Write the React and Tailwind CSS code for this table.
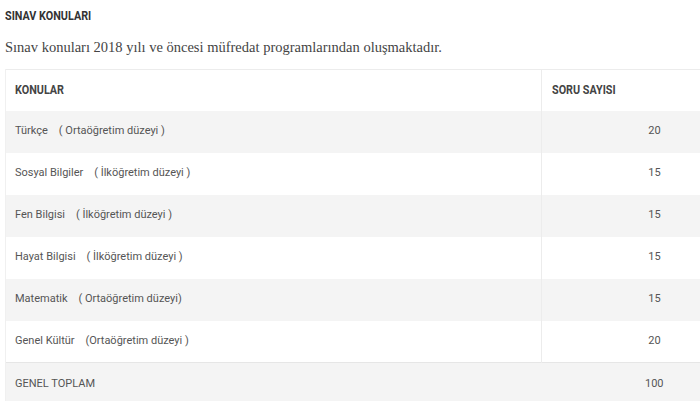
const rows = [
  { name: "Türkçe", level: "( Ortaöğretim düzeyi )", count: 20, gray: true },
  { name: "Sosyal Bilgiler", level: "( İlköğretim düzeyi )", count: 15 },
  { name: "Fen Bilgisi", level: "( İlköğretim düzeyi )", count: 15, gray: true },
  { name: "Hayat Bilgisi", level: "( İlköğretim düzeyi )", count: 15 },
  { name: "Matematik", level: "( Ortaöğretim düzeyi)", count: 15, gray: true },
  { name: "Genel Kültür", level: "(Ortaöğretim düzeyi )", count: 20 },
];

export default function App() {
  return (
    <div className="w-[700px] h-[401px] overflow-hidden bg-white">
      <div className="pl-[5px] pt-[9px]">
        <h3 className="font-['Roboto',sans-serif] font-bold text-[12px] leading-[14px] text-[#333] scale-x-[0.9] origin-left">
          SINAV KONULARI
        </h3>
        <p className="mt-[15px] font-['Liberation_Serif',serif] text-[14.5px] leading-[18px] text-[#444]">
          Sınav konuları 2018 yılı ve öncesi müfredat programlarından oluşmaktadır.
        </p>
        <table className="mt-[13px] w-[762px] border-collapse font-['Roboto',sans-serif] text-[11px] text-[#555]">
          <thead>
            <tr className="h-[41px] bg-white border-t border-[#ececec]">
              <th className="w-[536px] border-l border-[#f0f0f0] pl-[9px] text-left font-bold text-[12px] text-[#444]">
                <span className="inline-block scale-x-[0.9] origin-left">KONULAR</span>
              </th>
              <th className="border-l border-[#ececec] pl-[10px] text-left font-bold text-[12px] text-[#444]">
                <span className="inline-block scale-x-[0.9] origin-left">SORU SAYISI</span>
              </th>
            </tr>
          </thead>
          <tbody>
            {rows.map((r) => (
              <tr
                key={r.name}
                className={r.gray ? "h-[42px] bg-[#f4f4f4]" : "h-[42px] bg-white"}
              >
                <td className="border-l border-[#f0f0f0] pl-[9px] whitespace-pre">
                  {r.name + "    " + r.level}
                </td>
                <td className="border-l border-[#ececec] text-center">{r.count}</td>
              </tr>
            ))}
            <tr className="h-[42px] bg-[#f4f4f4] border-t border-[#e6e6e6]">
              <td className="border-l border-[#f0f0f0] pl-[9px]">GENEL TOPLAM</td>
              <td className="text-center">100</td>
            </tr>
          </tbody>
        </table>
      </div>
    </div>
  );
}
